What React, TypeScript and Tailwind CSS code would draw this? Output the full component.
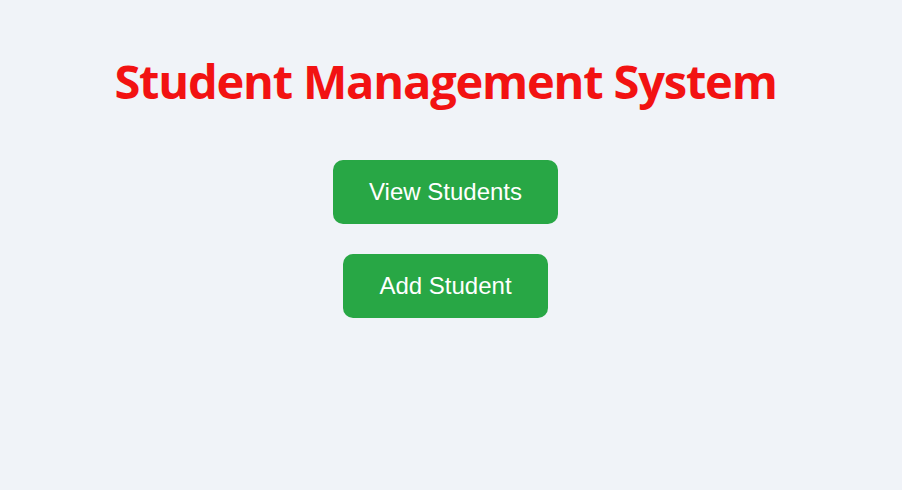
export default function App() {
  return (
    <main className="min-h-[490px] bg-[#f0f3f8] pr-[11px] pt-[48px] font-['Liberation_Sans',Arial,sans-serif]">
      <h1 className="text-center font-['Open_Sans',sans-serif] text-[47px] font-bold leading-[66px] text-[#f21212] tracking-[-1.2px]">
        Student Management System
      </h1>
      <div className="mt-[46px] flex flex-col items-center gap-[30px]">
        <button className="rounded-[10px] bg-[#28a745] px-[36px] py-[18px] text-[24px] leading-[28px] text-white">
          View Students
        </button>
        <button className="rounded-[10px] bg-[#28a745] px-[36px] py-[18px] text-[24px] leading-[28px] text-white">
          Add Student
        </button>
      </div>
    </main>
  );
}
